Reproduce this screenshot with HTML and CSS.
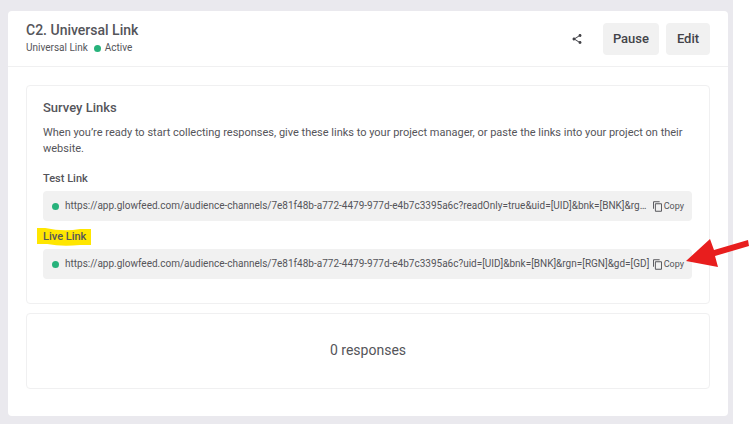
FILE: index.html
```html
<!DOCTYPE html>
<html lang="en">
<head>
<meta charset="utf-8">
<title>C2. Universal Link</title>
<link rel="stylesheet" href="styles.css">
</head>
<body>
<div class="page">
  <main class="card">
    <header class="header">
      <div class="heading">
        <h1 class="title">C2. Universal Link</h1>
        <p class="meta"><span>Universal Link</span><span class="dot"></span><span>Active</span></p>
      </div>
      <div class="actions">
        <button class="share" type="button" aria-label="Share">
          <svg viewBox="0 0 24 24" width="12" height="12"><path d="M18 16.1c-.8 0-1.4.3-2 .8l-7.100-4.200c.1-.2.1-.5.1-.7s0-.5-.1-.7L16 7.200c.5.5 1.200.8 2 .8 1.700 0 3-1.300 3-3s-1.300-3-3-3-3 1.300-3 3c0 .2 0 .5.1.7L8 9.800C7.500 9.300 6.800 9 6 9c-1.700 0-3 1.300-3 3s1.300 3 3 3c.8 0 1.500-.3 2-.8l7.100 4.200c0 .2-.1.4-.1.6 0 1.600 1.300 2.900 3 2.900s3-1.300 3-2.900-1.300-2.900-3-2.900z"/></svg>
        </button>
        <button class="button" type="button">Pause</button>
        <button class="button" type="button">Edit</button>
      </div>
    </header>
    <div class="content">
      <section class="panel links">
        <h2 class="subtitle">Survey Links</h2>
        <p class="description">When you’re ready to start collecting responses, give these links to your project manager, or paste the links into your project on their website.</p>
        <h3 class="label">Test Link</h3>
        <div class="link-row">
          <span class="dot"></span>
          <span class="url">https://app.glowfeed.com/audience-channels/7e81f48b-a772-4479-977d-e4b7c3395a6c?readOnly=true&amp;uid=[UID]&amp;bnk=[BNK]&amp;rgn=[RGN]&amp;gd=[GD]</span>
          <button class="copy" type="button">
            <svg viewBox="2 1 19 22" width="9" height="11"><path d="M16 1H4a2 2 0 0 0-2 2v14h2V3h12V1zm3 4H8a2 2 0 0 0-2 2v14a2 2 0 0 0 2 2h11a2 2 0 0 0 2-2V7a2 2 0 0 0-2-2zm0 16H8V7h11v14z"/></svg>
            <span>Copy</span>
          </button>
        </div>
        <h3 class="label"><span class="marked"><svg class="marker" viewBox="0 0 53 18" preserveAspectRatio="none"><path d="M0 0L8 0Q26 4 42 1L53 1V17L42 17Q24 19 10 16L0 16Z"/></svg><span class="marked-text">Live Link</span></span></h3>
        <div class="link-row">
          <span class="dot"></span>
          <span class="url">https://app.glowfeed.com/audience-channels/7e81f48b-a772-4479-977d-e4b7c3395a6c?uid=[UID]&amp;bnk=[BNK]&amp;rgn=[RGN]&amp;gd=[GD]</span>
          <button class="copy" type="button">
            <svg viewBox="2 1 19 22" width="9" height="11"><path d="M16 1H4a2 2 0 0 0-2 2v14h2V3h12V1zm3 4H8a2 2 0 0 0-2 2v14a2 2 0 0 0 2 2h11a2 2 0 0 0 2-2V7a2 2 0 0 0-2-2zm0 16H8V7h11v14z"/></svg>
            <span>Copy</span>
          </button>
          <svg class="arrow" viewBox="0 0 63 32" width="63" height="32"><path d="M0 23L24 1L28 12L62 2L63 8L29 18L32 29Z"/></svg>
        </div>
      </section>
      <section class="panel responses">0 responses</section>
    </div>
  </main>
</div>
</body>
</html>
```
FILE: styles.css
```css
* {
  box-sizing: border-box;
}

body {
  margin: 0;
  background: #fff;
  color: #55555a;
  font-family: Roboto, "Liberation Sans", sans-serif;
  font-size: 11px;
  line-height: 16px;
}

h1, h2, h3, p {
  margin: 0;
  font-weight: 500;
}

button {
  border: 0;
  padding: 0;
  background: none;
  color: inherit;
  font: inherit;
  cursor: pointer;
}

svg {
  display: block;
  fill: currentColor;
}

.page {
  min-height: 100vh;
  margin-right: 16px;
  padding: 11px 5px 8px 8px;
  background: #eae9ee;
}

.card {
  padding-bottom: 27px;
  border-radius: 4px;
  background: #fff;
}

.header {
  display: flex;
  align-items: center;
  justify-content: space-between;
  padding: 10px 18px;
  border-bottom: 1px solid #f0f0f1;
}

.title {
  font-size: 14px;
  line-height: 18px;
}

.meta {
  display: flex;
  align-items: center;
  gap: 4px;
  padding-top: 1px;
  font-size: 10px;
  font-weight: 400;
}

.meta .dot {
  margin-left: 2px;
}

.dot {
  flex: none;
  width: 7px;
  height: 7px;
  border-radius: 50%;
  background: #27b27b;
}

.actions {
  display: flex;
  align-items: center;
  gap: 7px;
}

.share {
  padding: 10px 13px;
  color: #434348;
}

.button {
  min-width: 44px;
  padding: 8px 10px;
  border-radius: 4px;
  background: #f1f1f1;
  color: #434348;
  font-size: 13px;
  font-weight: 500;
}

.content {
  display: grid;
  gap: 9px;
  padding: 18px 18px 0;
}

.panel {
  min-width: 0;
  border: 1px solid #f0f0f1;
  border-radius: 4px;
}

.links {
  padding: 14px 17px 24px 16px;
}

.subtitle {
  margin-bottom: 9px;
  font-size: 13px;
}

.description {
  margin-bottom: 14px;
  font-weight: 400;
}

.label {
  margin-bottom: 4px;
  font-size: 11px;
}

.link-row {
  position: relative;
  display: flex;
  align-items: center;
  gap: 2px;
  padding: 7px 8px 7px 9px;
  border-radius: 4px;
  background: #f1f1f1;
  font-size: 10px;
}

.link-row + .label {
  margin-top: 8px;
}

.url {
  flex: 1;
  overflow: hidden;
  margin-left: 4px;
  text-overflow: ellipsis;
  white-space: nowrap;
}

.copy {
  display: flex;
  align-items: center;
  gap: 2px;
  font-size: 9px;
}

.marked {
  position: relative;
}

.marked-text {
  position: relative;
}

.marker {
  position: absolute;
  inset: -2px -5px -3px -6px;
  width: calc(100% + 11px);
  height: 18px;
  fill: #ffe600;
}

.arrow {
  position: absolute;
  top: -11px;
  left: calc(100% - 6px);
  fill: #e81e1e;
}

.responses {
  padding: 28px 16px 30px;
  font-size: 14px;
  text-align: center;
}
```
